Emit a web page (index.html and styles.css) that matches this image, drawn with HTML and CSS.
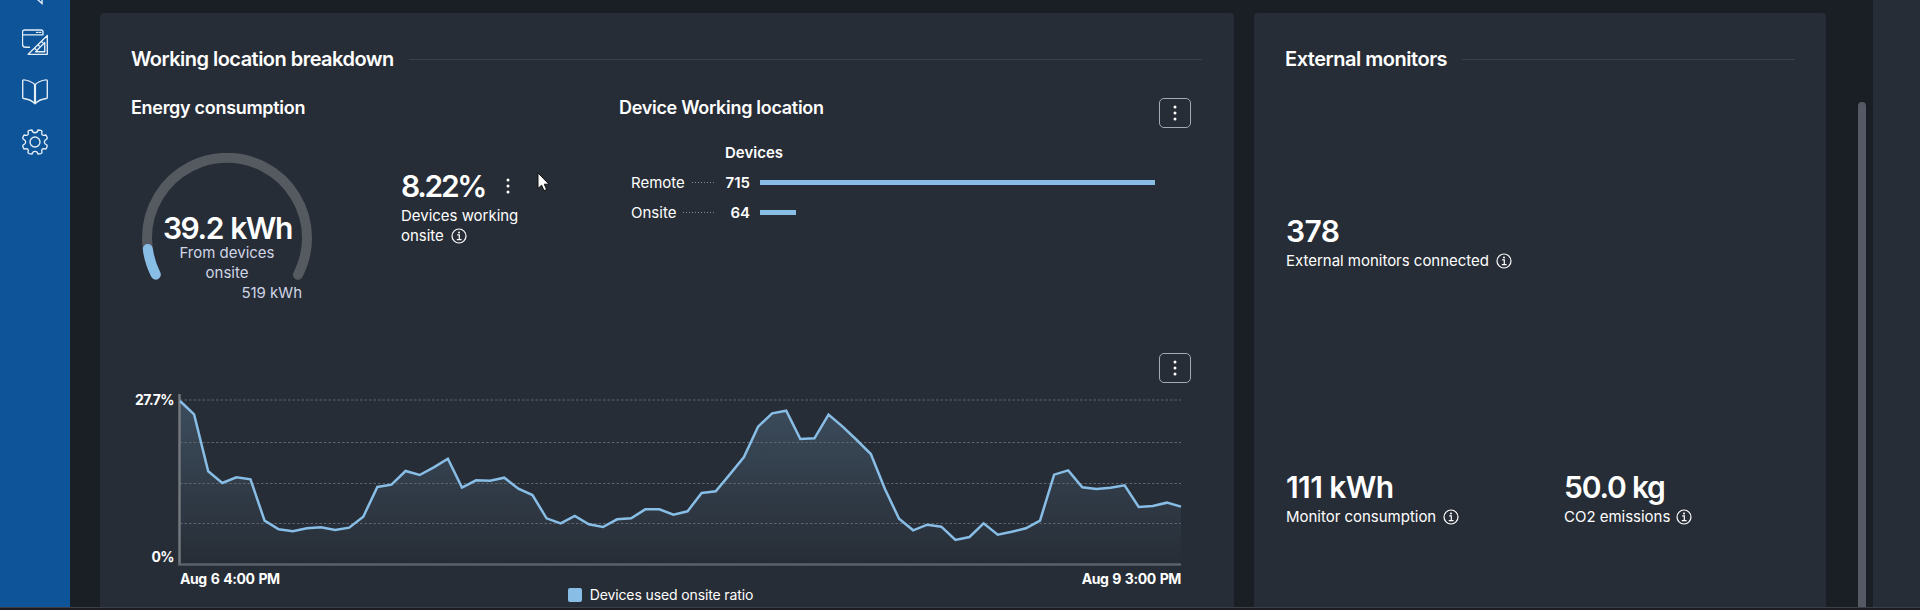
FILE: index.html
```html
<!DOCTYPE html>
<html lang="en">
<head>
<meta charset="utf-8">
<title>Working location breakdown</title>
<link rel="stylesheet" href="styles.css">
</head>
<body>
<div class="app">
  <nav class="sidebar">
    <svg class="nav-partial" width="10" height="6" viewBox="0 0 10 6"><path d="M1 -1 L6 3.500 V-1"/></svg>
    <svg class="nav-icon" viewBox="0 0 26 26"><path d="M7.500 18.200H3.500a3 3 0 0 1-3-3V3a2 2 0 0 1 2-2H19a2 2 0 0 1 2 2V5.800H.5M14.600 3.400h1.200M17.400 3.400h1.400M25.300 6.500V25.300H6.200ZM22.700 13.500V22.700H13.600ZM19.300 12.400l1.200 1.200M16 15.800l1.200 1.200M12.700 19.200l1.200 1.200"/></svg>
    <svg class="nav-icon" viewBox="0 0 26 26"><path d="M13 5.800C10.500 3 5 .8 1.600.8Q.7.8.7 1.800V18.400Q.7 19.400 1.700 19.500C6 20 10.500 22 13 24.800C15.500 22 20 20 24.300 19.500Q25.300 19.400 25.300 18.400V1.800Q25.300.8 24.400.8C21 .8 15.500 3 13 5.800ZM12.600 6V24.500M13.400 6V24.500"/></svg>
    <svg class="nav-icon" viewBox="0 0 26 26"><circle cx="13" cy="13" r="5"/><path d="M7.200 1.300 10 1Q10.600 3.700 13 3.700T16 1L18.800 1.300 20 2.200 19.700 4.800Q20 6.300 21.500 6.300L24 6 25.200 8.500 25 9.800Q22.300 11 22.300 13T25 16.200L25.200 17.500 24 20 21.500 19.700Q20 19.700 19.700 21.200L20 23.800 18.800 24.700 16 25Q15.400 22.300 13 22.300T10 25L7.200 24.700 6 23.800 6.300 21.200Q6 19.700 4.500 19.700L2 20 .8 17.500 1 16.200Q3.700 15 3.700 13T1 9.800L.8 8.500 2 6 4.500 6.300Q6 6.300 6.300 4.800L6 2.200Z"/></svg>
  </nav>
  <main class="content">
    <section class="card card-main">
      <header class="card-head"><h2>Working location breakdown</h2><i class="rule"></i></header>
      <div class="top">
        <div class="energy">
          <h3>Energy consumption</h3>
          <div class="energy-row">
            <div class="gauge">
              <svg class="gauge-arc" viewBox="0 0 172 128"><path class="track" d="M15 121.700A80 80 0 1 1 157 121.700"/><path class="fill" d="M14.700 121.500A80 80 0 0 1 6.800 96"/></svg>
              <div class="gauge-label"><div class="big">39.2 kWh</div><div>From devices<br>onsite</div></div>
              <div class="gauge-max">519 kWh</div>
            </div>
            <div class="kpi ratio">
              <div class="big-row"><div class="big">8.22%</div><svg class="dots" viewBox="0 0 4 16"><circle cx="2" cy="2" r="1.500"/><circle cx="2" cy="8" r="1.500"/><circle cx="2" cy="14" r="1.500"/></svg></div>
              <div class="label">Devices working<br>onsite <svg class="info" viewBox="0 0 16 16"><circle cx="8" cy="8" r="7"/><path d="M6.200 6.800H8.300V11.500M5.800 11.600H10.600"/><circle class="dot" cx="8" cy="4.400" r="1"/></svg></div>
            </div>
          </div>
        </div>
        <div class="location">
          <h3>Device Working location</h3>
          <div class="bars">
            <b class="col-title">Devices</b>
            <span class="name">Remote<i class="leader"></i></span><b class="num">715</b><i class="bar" style="width:395px"></i>
            <span class="name">Onsite<i class="leader"></i></span><b class="num">64</b><i class="bar" style="width:36px"></i>
          </div>
        </div>
        <button class="menu"><svg class="dots" viewBox="0 0 4 16"><circle cx="2" cy="2" r="1.500"/><circle cx="2" cy="8" r="1.500"/><circle cx="2" cy="14" r="1.500"/></svg></button>
      </div>
      <div class="trend">
        <button class="menu"><svg class="dots" viewBox="0 0 4 16"><circle cx="2" cy="2" r="1.500"/><circle cx="2" cy="8" r="1.500"/><circle cx="2" cy="14" r="1.500"/></svg></button>
        <div class="plot">
          <div class="y-axis"><span>27.7%</span><span>0%</span></div>
          <svg class="chart" viewBox="0 0 1004 176">
            <defs><linearGradient id="area" gradientUnits="userSpaceOnUse" x1="0" y1="180" x2="0" y2="672"><stop offset="0" stop-color="#88bde6" stop-opacity=".22"/><stop offset="1" stop-color="#88bde6" stop-opacity="0"/></linearGradient></defs>
            <g transform="translate(2 -50) scale(14.0986 .33333)">
              <path fill="url(#area)" d="M0 672V183L1 223 2 394 3 429 4 412 5 418 6 542 7 568 8 574 9 565 10 562 11 570 12 563 13 530 14 441 15 434 16 393 17 405 18 382 19 356 20 443 21 421 22 422 23 413 24 446 25 465 26 535 27 550 28 528 29 553 30 561 31 538 32 535 33 508 34 508 35 524 36 514 37 459 38 454 39 403 40 351 41 260 42 220 43 212 44 297 45 295 46 224 47 260 48 300 49 342 50 447 51 536 52 571 53 554 54 560 55 600 56 591 57 550 58 584 59 575 60 565 61 542 62 404 63 391 64 442 65 447 66 443 67 436 68 501 69 498 70 488 71 500V672Z"/>
            </g>
            <path class="grid" d="M2 10H1003M2 52.500H1003M2 93.500H1003M2 133.500H1003"/>
            <path class="axis" d="M1.500 4V175"/><path class="base" d="M0 174.500H1003"/><path class="grid" d="M2 174.500H1003"/>
            <g transform="translate(2 -50) scale(14.0986 .33333)">
              <path class="line" d="M0 183L1 223 2 394 3 429 4 412 5 418 6 542 7 568 8 574 9 565 10 562 11 570 12 563 13 530 14 441 15 434 16 393 17 405 18 382 19 356 20 443 21 421 22 422 23 413 24 446 25 465 26 535 27 550 28 528 29 553 30 561 31 538 32 535 33 508 34 508 35 524 36 514 37 459 38 454 39 403 40 351 41 260 42 220 43 212 44 297 45 295 46 224 47 260 48 300 49 342 50 447 51 536 52 571 53 554 54 560 55 600 56 591 57 550 58 584 59 575 60 565 61 542 62 404 63 391 64 442 65 447 66 443 67 436 68 501 69 498 70 488 71 500"/>
            </g>
          </svg>
        </div>
        <div class="x-axis"><span>Aug 6 4:00 PM</span><span>Aug 9 3:00 PM</span></div>
        <div class="legend"><i class="swatch"></i>Devices used onsite ratio</div>
      </div>
    </section>
    <section class="card card-side">
      <header class="card-head"><h2>External monitors</h2><i class="rule"></i></header>
      <div class="kpi connected"><div class="big">378</div><div class="label">External monitors connected <svg class="info" viewBox="0 0 16 16"><circle cx="8" cy="8" r="7"/><path d="M6.200 6.800H8.300V11.500M5.800 11.600H10.600"/><circle class="dot" cx="8" cy="4.400" r="1"/></svg></div></div>
      <div class="kpi-pair">
        <div class="kpi"><div class="big">111 kWh</div><div class="label">Monitor consumption <svg class="info" viewBox="0 0 16 16"><circle cx="8" cy="8" r="7"/><path d="M6.200 6.800H8.300V11.500M5.800 11.600H10.600"/><circle class="dot" cx="8" cy="4.400" r="1"/></svg></div></div>
        <div class="kpi emissions"><div class="big">50.0 kg</div><div class="label">CO2 emissions <svg class="info" viewBox="0 0 16 16"><circle cx="8" cy="8" r="7"/><path d="M6.200 6.800H8.300V11.500M5.800 11.600H10.600"/><circle class="dot" cx="8" cy="4.400" r="1"/></svg></div></div>
      </div>
    </section>
  </main>
  <div class="scroll"><i class="thumb"></i></div>
  <aside class="panel"></aside>
</div>
<footer class="edge"></footer>
<svg class="cursor" viewBox="0 0 13 20"><path d="M1 1V16.500L4.600 13.200 7 18.600 9.600 17.500 7.300 12.200H12Z"/></svg>
</body>
</html>
```
FILE: styles.css
```css
* { box-sizing: border-box; }
body { margin: 0; height: 610px; overflow: hidden; background: #1a1e25; color: #fff; font: 15px/20px Inter, sans-serif; display: flex; flex-direction: column; }
h2, h3 { margin: 0; font-weight: 600; white-space: nowrap; }
h2 { font-size: 20px; line-height: 28px; letter-spacing: -.53px; }
.card-side h2 { letter-spacing: -.48px; }
h3 { font-size: 18px; line-height: 24px; letter-spacing: -.3px; }
b { font-weight: 600; }
svg { flex: none; }
.app { display: flex; height: 607px; overflow: hidden; }
.sidebar { width: 70px; background: #0d5499; display: flex; flex-direction: column; align-items: center; gap: 24px; flex: none; }
.nav-icon { width: 26px; height: 26px; fill: none; stroke: #e6eef6; stroke-width: 1.35; stroke-linejoin: round; stroke-linecap: round; }
.nav-partial { fill: none; stroke: #e6eef6; stroke-width: 1.4; margin: 0 0 -1px 12px; }
.content { display: flex; gap: 20px; padding: 13px 0 0 30px; }
.card { background: #272d36; height: 620px; border-radius: 4px; flex: none; }
.card-main { width: 1134px; padding: 32px 32px 0 31px; }
.card-side { width: 572px; padding: 32px 31px 0; }
.card-head { display: flex; align-items: center; gap: 15px; height: 28px; }
.rule { flex: 1; height: 1px; background: #3b3f49; }
.top { display: flex; margin-top: 23px; height: 257px; }
.energy { width: 488px; }
.energy-row { display: flex; }
.gauge { width: 172px; margin: 33px 0 0 10px; display: flex; flex-direction: column; text-align: center; color: #cfd5e6; }
.gauge-arc { width: 172px; height: 128px; fill: none; stroke-width: 10; stroke-linecap: round; }
.track { stroke: #555a61; }
.fill { stroke: #88bde6; }
.gauge-label { margin-top: -73px; }
.gauge-max { text-align: right; padding-right: 11px; }
.big { font-size: 30px; line-height: 40px; font-weight: 600; color: #fff; letter-spacing: -.6px; white-space: nowrap; }
.gauge .big { margin-bottom: -5px; letter-spacing: -1.4px; word-spacing: 1px; padding-left: 1px; }
.ratio { margin: 46px 0 0 88px; }
.ratio .big { letter-spacing: -2.3px; }
.emissions .big { letter-spacing: -1.2px; }
.big-row { display: flex; align-items: center; gap: 21px; }
.dots { width: 4px; height: 16px; fill: #fff; }
.label { white-space: nowrap; letter-spacing: -.02px; }
.info { width: 16px; height: 16px; margin-left: 3px; vertical-align: -3px; fill: none; stroke: #fff; stroke-width: 1.2; }
.emissions .info { margin-left: 1px; }
.info .dot { fill: #fff; stroke: none; }
.location { width: 540px; }
.bars { display: grid; grid-template-columns: 94px 26px 400px; grid-template-rows: 28px 30px 30px; align-items: center; margin: 19px 0 0 12px; }
.col-title { grid-column: 2 / 4; }
.name { display: flex; align-items: center; gap: 7px; padding-right: 9px; grid-column: 1; margin-top: 1px; }
.leader { flex: 1; height: 1px; background: repeating-linear-gradient(90deg, #858a96 0 1px, transparent 1px 3px); }
.num { text-align: right; margin-top: 1px; padding-right: 1px; }
.bar { height: 5px; background: #88bde6; margin-left: 9px; }
.menu { width: 32px; height: 30px; padding: 0; border: 1px solid #a4a9b6; border-radius: 5px; background: none; display: flex; align-items: center; justify-content: center; margin: 2px 0 0; }
.trend { display: flex; flex-direction: column; }
.trend .menu { align-self: flex-end; margin: 0 11px 0 0; }
.plot { display: flex; margin-top: 7px; }
.y-axis { width: 47px; padding-right: 4px; display: flex; flex-direction: column; justify-content: space-between; text-align: right; font-weight: 700; font-size: 14px; height: 177px; letter-spacing: -.6px; }
.chart { width: 1004px; height: 176px; }
.grid { stroke: #5f656e; stroke-dasharray: 2.5 2; fill: none; }
.axis { stroke: #73777e; stroke-width: 2.500; }
.base { stroke: #5b6067; stroke-width: 2.500; }
.line { fill: none; stroke: #88bde6; stroke-width: 2.500; vector-effect: non-scaling-stroke; }
.x-axis { display: flex; justify-content: space-between; margin: 2px 21px 0 49px; font-weight: 700; font-size: 14px; line-height: 20px; letter-spacing: -.4px; word-spacing: .9px; }
.legend { display: flex; align-items: center; align-self: center; gap: 8px; font-size: 14px; line-height: 16px; margin: -2px 12px 0 0; letter-spacing: -.12px; }
.swatch { width: 14px; height: 14px; border-radius: 2px; background: #88bde6; }
.connected { margin-top: 138px; }
.card-side .kpi { padding-left: 1px; }
.kpi-pair { display: grid; grid-template-columns: 278px 1fr; margin-top: 196px; }
.scroll { padding: 102px 0 0 32px; }
.thumb { display: block; width: 8px; height: 520px; border-radius: 4px; background: #555963; }
.panel { flex: 1; margin-left: 7px; background: #272d36; }
.edge { height: 3px; border-top: 1px solid #3c4046; background: #1c1d20; }
.cursor { position: absolute; left: 537px; top: 172px; width: 13px; height: 20px; fill: #fff; stroke: #111; }
```
